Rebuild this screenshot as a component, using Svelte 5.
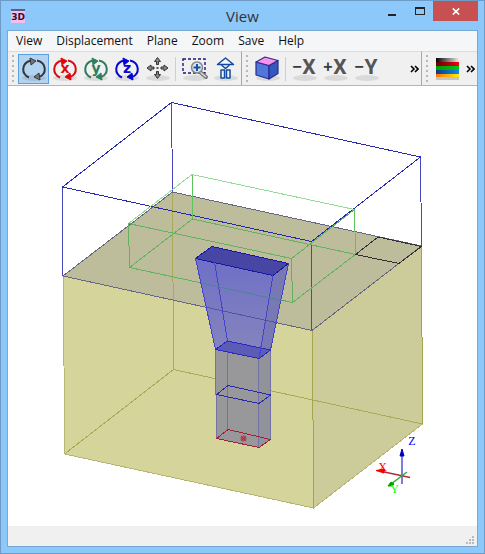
<script lang="ts">
  const menus = ['View', 'Displacement', 'Plane', 'Zoom', 'Save', 'Help'];

  const rotations = [
    { id: 'free', label: 'Rotate', letter: '', color: '#34383c', head: '#777777' },
    { id: 'x', label: 'Rotate around X', letter: 'x', color: '#d80c12', head: '#e60000' },
    { id: 'y', label: 'Rotate around Y', letter: 'y', color: '#2f7d5d', head: '#2c8060' },
    { id: 'z', label: 'Rotate around Z', letter: 'z', color: '#0707cf', head: '#0000e0' },
  ];

  const views = [
    { sign: '−', axis: 'X' },
    { sign: '+', axis: 'X' },
    { sign: '−', axis: 'Y' },
  ];

  let mode = $state('free');
</script>

{#snippet shadow()}
  <ellipse cx="16" cy="24" rx="12" ry="3" fill="#000" opacity="0.09" />
{/snippet}

{#snippet more(label: string)}
  <button class="more" aria-label={label}>
    <svg width="9" height="8" viewBox="0 0 9 8">
      <path d="M1 1l3 3-3 3M5 1l3 3-3 3" fill="none" stroke="#000" stroke-width="1.6" />
    </svg>
  </button>
{/snippet}

<div class="window">
  <header class="titlebar">
    <svg class="app-icon" width="16" height="16" viewBox="0 0 16 16">
      <rect x="1" y="1" width="14" height="14" fill="#f3bdec" />
      <rect x="1" y="1" width="14" height="2" fill="#5c5c86" />
      <text x="8" y="12" text-anchor="middle" font-size="9" fill="#301030">3D</text>
    </svg>
    <h1>View</h1>
    <div class="controls">
      <button class="ctl" aria-label="Minimize">
        <svg width="9" height="9" viewBox="0 0 9 9"><path d="M0 7h8v2H0z" fill="#222" /></svg>
      </button>
      <button class="ctl" aria-label="Maximize">
        <svg width="10" height="8" viewBox="0 0 10 8" shape-rendering="crispEdges">
          <path d="M0 0h10v8H0zM1 2v5h8V2z" fill="#222" fill-rule="evenodd" />
        </svg>
      </button>
      <button class="ctl close" aria-label="Close">
        <svg width="8" height="7" viewBox="0 0 8 7">
          <path d="M.8.5l6.4 6M7.2.5l-6.4 6" stroke="#fff" stroke-width="1.7" />
        </svg>
      </button>
    </div>
  </header>

  <main class="client">
    <nav class="menubar">
      {#each menus as item}
        <button>{item}</button>
      {/each}
    </nav>

    <div class="toolbars">
      <div class="toolbar">
        <span class="grip"></span>
        {#each rotations as r (r.id)}
          <button class="tool" class:active={mode === r.id} aria-label={r.label} onclick={() => (mode = r.id)}>
            <svg viewBox="0 0 31 30">
              {@render shadow()}
              <g fill="none" stroke={r.color} stroke-width="2">
                <path d="M13 6.500C3 9 3 20 11 23.500" />
                <path d="M19 6.500C29 9 29 20 21 23" />
              </g>
              <path d="M12 4l6 3-5 4z" fill={r.head} stroke={r.color} />
              <path d="M22 26l-6-3 5-4z" fill={r.head} stroke={r.color} />
              <text x="16" y="19" text-anchor="middle" font-size="14" fill={r.color}>{r.letter}</text>
            </svg>
          </button>
        {/each}
        <button class="tool" aria-label="Move">
          <svg viewBox="0 0 31 30">
            {@render shadow()}
            <rect x="14.500" y="13" width="2" height="2" fill="#555" />
            <g fill="#888" stroke="#333">
              <path d="M15.500 3.500l3 4h-2v3h-2v-3h-2z" />
              <path d="M15.500 24.500l3-4h-2v-3h-2v3h-2z" />
              <path d="M5 14l4-3v2h3v2H9v2z" />
              <path d="M26 14l-4-3v2h-3v2h3v2z" />
            </g>
          </svg>
        </button>
        <span class="separator"></span>
        <button class="tool" aria-label="Zoom window">
          <svg viewBox="0 0 31 30">
            {@render shadow()}
            <rect x="4" y="5" width="22" height="14" fill="none" stroke="#16167c" stroke-width="1.400" stroke-dasharray="3 2" />
            <path d="M21 18l6 5" stroke="#777" stroke-width="4" stroke-linecap="round" />
            <path d="M21 18l6 5" stroke="#ddd" stroke-width="1.500" />
            <circle cx="18" cy="13.500" r="5.500" fill="#d7e7f5" stroke="#888" stroke-width="1.500" />
            <path d="M14.500 13.500h7M18 10v7" stroke="#1e4f9c" stroke-width="2" />
          </svg>
        </button>
        <button class="tool" aria-label="Walk">
          <svg viewBox="0 0 31 30">
            {@render shadow()}
            <g fill="#f3f6fb" stroke="#134a9f" stroke-width="1.500" stroke-linejoin="round">
              <path d="M12 10.500v1l3.500 3 3.500-3v-1" />
              <path d="M15.500 4l8 6.500h-16z" />
              <path d="M11 16h3.500v8H11zM16.500 16H20v8h-3.500z" />
            </g>
          </svg>
        </button>
      </div>

      <div class="toolbar views">
        <span class="grip"></span>
        <button class="tool" aria-label="Isometric view">
          <svg viewBox="0 0 31 30">
            {@render shadow()}
            <g stroke="#2b2b90" stroke-width="1.200" stroke-linejoin="round">
              <path d="M4 8l13 3.500V25L4 21z" fill="#4f78da" />
              <path d="M17 11.500l9-5v13L17 25z" fill="#3459bd" />
              <path d="M4 8l9-5 13 3.500-9 5z" fill="#f793ec" />
            </g>
          </svg>
        </button>
        <span class="separator"></span>
        {#each views as v}
          <button class="tool" aria-label="View {v.sign}{v.axis}">
            <svg viewBox="0 0 31 30">
              {@render shadow()}
              <text class="sign" x="8" y="18" text-anchor="middle" font-size="16" fill="#3b3b3b">{v.sign}</text>
              <text class="axis" x="20" y="20" text-anchor="middle" font-size="21" fill="#555">{v.axis}</text>
            </svg>
          </button>
        {/each}
        {@render more('More views')}
      </div>

      <div class="toolbar">
        <span class="grip"></span>
        <button class="tool" aria-label="Colors">
          <svg viewBox="0 0 31 30">
            <defs>
              <linearGradient id="grey"><stop stop-color="#000" /><stop offset="1" stop-color="#eee" /></linearGradient>
              <linearGradient id="red"><stop stop-color="#600" /><stop offset="1" stop-color="#f00010" /></linearGradient>
              <linearGradient id="green"><stop stop-color="#009800" /><stop offset="1" stop-color="#00c810" /></linearGradient>
              <linearGradient id="blue"><stop stop-color="#053f80" /><stop offset="1" stop-color="#1688f0" /></linearGradient>
              <linearGradient id="yellow"><stop stop-color="#ff7000" /><stop offset="1" stop-color="#fff000" /></linearGradient>
            </defs>
            <rect x="4" y="23" width="23" height="3" fill="#c4c4c4" />
            <rect x="4" y="4" width="23" height="4" fill="url(#grey)" />
            <rect x="4" y="8" width="23" height="4" fill="url(#red)" />
            <rect x="4" y="12" width="23" height="4" fill="url(#green)" />
            <rect x="4" y="16" width="23" height="4" fill="url(#blue)" />
            <rect x="4" y="20" width="23" height="3" fill="url(#yellow)" />
          </svg>
        </button>
        {@render more('More colors')}
      </div>
    </div>

    <svg class="scene" viewBox="8 86 469 440" role="img" aria-label="3D model">
      <defs>
        <linearGradient id="front" x2="0" y2="1">
          <stop stop-color="#6f6fc6" />
          <stop offset="1" stop-color="#8686bd" />
        </linearGradient>
      </defs>

      <g shape-rendering="crispEdges" fill="none">
        <!-- soil block -->
        <path d="M63 276L312 330.500L313.500 508L64.500 454z" fill="#d4d49b" />
        <path d="M312 330.500L421.500 246L422.500 424L313.500 508z" fill="#cccc9a" />
        <path d="M172.500 192L421.500 246L312 330.500L63 276z" fill="#bdbd9b" />
        <path d="M172.500 192L173.500 369.500M64.500 454L173.500 369.500L422.500 424" stroke="#a9a958" />
        <path d="M63.500 276L64.500 454L313.500 508L422.500 424" stroke="#b6b670" />
        <path d="M312.500 330L313.500 508M421.500 246L422.500 424" stroke="#a5a54c" />
        <path d="M172.500 192L421.500 246L312 330.500L63 276z" stroke="#666686" />

        <!-- upper outline -->
        <path d="M62.500 187V276M171.500 102L172.500 192M420.500 157L421.500 246M311.500 241V330" stroke="#4646bd" />
        <path d="M171.500 102.500L420.500 157L311.500 241.500L62.500 187z" stroke="#2929af" />

        <!-- inner box -->
        <path d="M128.500 223.500L192 174.500L354.500 209.500" stroke="#96db96" />
        <path d="M192.500 174.500V219M354.500 209.500L355.500 254.500" stroke="#5dc35d" />
        <path
          d="M354.500 209.500L291.500 258.500L128.500 223.500L129.500 267.500L292.500 302.500L355.500 254.500L192.500 219L129.500 267.500M291.500 258.500L292.500 302.500"
          stroke="#64b260"
        />
        <path d="M378 237L421.500 246.500L399 263.500L355.500 254.500z" stroke="#303034" />

        <!-- column -->
        <path d="M215.500 349.500L227.500 341L270.500 350V439.500L259 447.500L216.500 438.500z" fill="#98989b" />
        <path d="M259 358.500L270.500 350V439.500L259 447.500z" fill="#92929b" />
        <path d="M215.500 349.500L216.500 438.500M227.500 341V429.500M258.500 358.500V447.500M270.500 350V439.500" stroke="#7272a5" />
        <path d="M228 385.500L270.500 395L259 403.500L216.500 394.500z" stroke="#2828af" />
        <path d="M228 429.500L270.500 439.500L259 447.500L216.500 438.500z" stroke="#a51f35" />

        <!-- tapered head -->
        <path d="M195.500 258.500L273 275.500L259 358.500L215.500 349.500z" fill="url(#front)" />
        <path d="M273 275.500L288.500 263.500L270.500 350L259 358.500z" fill="#7878b5" />
        <path d="M227.500 341L270.500 350L259 358.500L215.500 349.500z" fill="#5c5cb8" stroke="#2929c0" />
        <path d="M205 307L278 323" stroke="#54549f" />
        <path d="M212 246.500L288.500 263.500L273 275.500L195.500 258.500z" fill="#4747a3" stroke="#1717aa" />
        <path d="M195.500 258.500L215.500 349.500M212 246.500L227.500 341M273 275.500L259 358.500M288.500 263.500L270.500 350" stroke="#4242ca" />
        <path d="M201 283L284 301" stroke="#4c8499" />
      </g>
      <circle cx="243.500" cy="438.500" r="3" fill="#b14c56" />
      <path d="M241 441l5-5M241 436l5 5" stroke="#a02e3c" stroke-width="0.700" />

      <!-- axes -->
      <g fill="none">
        <path d="M402 484V456" stroke="#7c7cdd" stroke-width="2" />
        <path d="M410 477.500L382 471.500" stroke="#b02c36" stroke-width="1.500" />
        <path d="M407 472L391 484" stroke="#2fae36" stroke-width="1.500" />
      </g>
      <path d="M402 449l2 7h-4z" fill="#0000bb" stroke="#0000bb" />
      <path d="M376 470.500l8-1.500v4z" fill="#f00000" stroke="#f00000" />
      <path d="M388 486l3-4 3 2-2 2z" fill="#00a000" stroke="#00a000" />
      <g font-size="12" text-anchor="middle">
        <text x="412" y="445" fill="#0000ff">Z</text>
        <text x="382.500" y="471" fill="#ff0000">X</text>
        <text x="394.500" y="493" fill="#00ff00">Y</text>
      </g>
    </svg>

    <footer class="statusbar">
      <svg width="9" height="9" viewBox="0 0 9 9" shape-rendering="crispEdges">
        <path d="M6 0h2v2H6zM3 3h2v2H3zM6 3h2v2H6zM0 6h2v2H0zM3 6h2v2H3zM6 6h2v2H6z" fill="#bababa" />
      </svg>
    </footer>
  </main>
</div>

<style>
  :global(body) {
    margin: 0;
  }

  .window {
    display: flex;
    flex-direction: column;
    min-height: 100vh;
    box-sizing: border-box;
    padding: 0 6px 6px;
    border: 1px solid #6d9bc5;
    background: #8dc8fb;
    font-family: 'Open Sans', 'Noto Sans', sans-serif;
    color: #111;
  }

  button {
    margin: 0;
    padding: 0;
    border: 0;
    background: none;
    font: inherit;
    color: inherit;
  }

  svg {
    display: block;
  }

  .titlebar {
    display: grid;
    grid-template-columns: 1fr auto 1fr;
    height: 29px;
    align-items: center;
  }

  .app-icon {
    margin-left: 3px;
    font-family: 'DejaVu Sans', sans-serif;
    font-weight: bold;
  }

  h1 {
    margin: 0;
    font-size: 15px;
    font-weight: normal;
    line-height: 28px;
    color: #333;
  }

  .controls {
    display: flex;
    align-self: start;
    justify-content: flex-end;
  }

  .ctl {
    display: flex;
    align-items: center;
    justify-content: center;
    width: 27px;
    height: 20px;
  }

  .ctl.close {
    width: 45px;
    background: #c75050;
  }

  .client {
    flex: 1;
    display: flex;
    flex-direction: column;
    border: 1px solid #78a9d5;
    background: #fff;
  }

  .menubar {
    display: flex;
    height: 20px;
    padding-left: 1px;
    background: #f5f6f7;
    font-size: 12px;
    line-height: 20px;
  }

  .menubar button {
    padding: 0 7px;
  }

  .toolbars {
    display: flex;
    height: 34px;
    border-bottom: 1px solid #b5b5b5;
    background: #f0f0f0;
  }

  .toolbar {
    display: flex;
    align-items: center;
    padding-left: 4px;
    border-top: 1px solid #dcdcdc;
  }

  .toolbar:not(:last-child) {
    border-right: 1px solid #a8a8a8;
  }

  .views {
    flex: 1;
  }

  .grip {
    width: 2px;
    height: 28px;
    margin-right: 4px;
    background: repeating-linear-gradient(#b8b8b8 0 2px, #f0f0f0 2px 5px);
  }

  .tool {
    width: 31px;
    height: 30px;
    box-sizing: border-box;
  }

  .tool svg {
    width: 31px;
    height: 30px;
    font-family: 'DejaVu Sans', sans-serif;
    font-weight: bold;
  }

  .tool .sign {
    font-family: 'Liberation Sans', sans-serif;
  }

  .tool .axis {
    font-family: Roboto, sans-serif;
  }

  .tool.active {
    background: #b3d4f1;
    outline: 1px solid #5b9fe0;
    outline-offset: -1px;
  }

  .separator {
    width: 1px;
    height: 24px;
    margin: 0 3px 0 2px;
    background: #cfcfcf;
  }

  .more {
    margin-left: auto;
    padding: 0 2px 0 3px;
  }

  .scene {
    flex: 1;
    width: 100%;
    font-family: 'Liberation Serif', serif;
  }

  .statusbar {
    display: flex;
    align-items: flex-end;
    justify-content: flex-end;
    height: 20px;
    background: #f0f0f0;
  }

  .statusbar svg {
    margin: 0 2px 1px;
  }
</style>
